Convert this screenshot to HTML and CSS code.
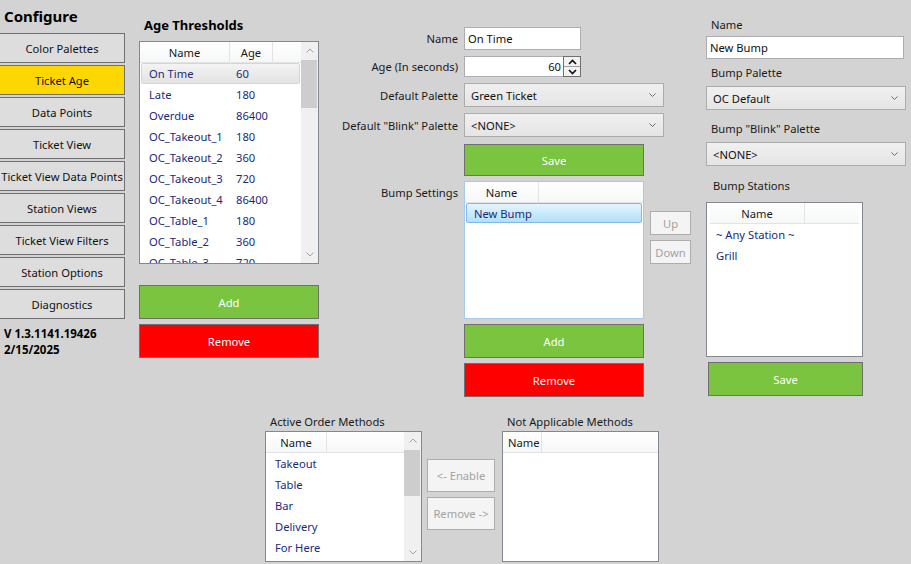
FILE: index.html
```html
<!DOCTYPE html>
<html lang="en">
<head>
    <meta charset="UTF-8">
    <meta name="viewport" content="width=device-width, initial-scale=1.0">
    <title>Configure - Ticket Age</title>
    <link rel="stylesheet" href="styles.css">
</head>
<body>
    <div class="main-area">
        <!-- Menu lateral -->
        <aside class="sidebar">
            <div class="title">Configure</div>
            <div class="nav">
                <button class="nav-btn">Color Palettes</button>
                <button class="nav-btn active">Ticket Age</button>
                <button class="nav-btn">Data Points</button>
                <button class="nav-btn">Ticket View</button>
                <button class="nav-btn">Ticket View Data Points</button>
                <button class="nav-btn">Station Views</button>
                <button class="nav-btn">Ticket View Filters</button>
                <button class="nav-btn">Station Options</button>
                <button class="nav-btn">Diagnostics</button>
            </div>
            <div class="version">V 1.3.1141.19426<br>2/15/2025</div>
        </aside>

        <!-- Lista de umbrales -->
        <section class="thresholds">
            <div class="section-title">Age Thresholds</div>
            <div class="listview thresholds-list">
                <div class="lv-main">
                    <div class="lv-header">
                        <div class="hcol th-name">Name</div>
                        <div class="hcol th-age">Age</div>
                        <div class="hcol fill"></div>
                    </div>
                    <div class="lv-row sel-gray"><span class="c-name">On Time</span><span>60</span></div>
                    <div class="lv-row"><span class="c-name">Late</span><span>180</span></div>
                    <div class="lv-row"><span class="c-name">Overdue</span><span>86400</span></div>
                    <div class="lv-row"><span class="c-name">OC_Takeout_1</span><span>180</span></div>
                    <div class="lv-row"><span class="c-name">OC_Takeout_2</span><span>360</span></div>
                    <div class="lv-row"><span class="c-name">OC_Takeout_3</span><span>720</span></div>
                    <div class="lv-row"><span class="c-name">OC_Takeout_4</span><span>86400</span></div>
                    <div class="lv-row"><span class="c-name">OC_Table_1</span><span>180</span></div>
                    <div class="lv-row"><span class="c-name">OC_Table_2</span><span>360</span></div>
                    <div class="lv-row"><span class="c-name">OC_Table_3</span><span>720</span></div>
                </div>
                <div class="scrollbar">
                    <div class="sb-btn"><svg width="8" height="5" viewBox="0 0 8 5"><path d="M0.5 4.5 L4 1 L7.5 4.5" fill="none" stroke="#a3a3a3"/></svg></div>
                    <div class="sb-track"><div class="sb-thumb"></div></div>
                    <div class="sb-btn"><svg width="8" height="5" viewBox="0 0 8 5"><path d="M0.5 0.5 L4 4 L7.5 0.5" fill="none" stroke="#a3a3a3"/></svg></div>
                </div>
            </div>
            <button class="btn green add-threshold">Add</button>
            <button class="btn red">Remove</button>
        </section>

        <!-- Edición del umbral -->
        <section class="editor">
            <div class="form-row r-name">
                <label class="form-label">Name</label>
                <div class="text-box name-box">On Time</div>
            </div>
            <div class="form-row r-age">
                <label class="form-label">Age (In seconds)</label>
                <div class="spin">
                    <div class="text-box spin-value">60</div>
                    <div class="spin-btns">
                        <div class="spin-btn"><svg width="9" height="6" viewBox="0 0 9 6"><path d="M1 5 L4.5 1.5 L8 5" fill="none" stroke="#111" stroke-width="1.6"/></svg></div>
                        <div class="spin-btn"><svg width="9" height="6" viewBox="0 0 9 6"><path d="M1 1 L4.5 4.5 L8 1" fill="none" stroke="#111" stroke-width="1.6"/></svg></div>
                    </div>
                </div>
            </div>
            <div class="form-row r-combo">
                <label class="form-label">Default Palette</label>
                <div class="combo wide-combo">
                    <span>Green Ticket</span>
                    <svg class="combo-arrow" width="7" height="4" viewBox="0 0 7 4"><path d="M0.5 0.5 L3.5 3.5 L6.5 0.5" fill="none" stroke="#6a6a6a"/></svg>
                </div>
            </div>
            <div class="form-row r-combo">
                <label class="form-label">Default "Blink" Palette</label>
                <div class="combo wide-combo">
                    <span>&lt;NONE&gt;</span>
                    <svg class="combo-arrow" width="7" height="4" viewBox="0 0 7 4"><path d="M0.5 0.5 L3.5 3.5 L6.5 0.5" fill="none" stroke="#6a6a6a"/></svg>
                </div>
            </div>
            <div class="form-row r-save">
                <span class="form-label"></span>
                <button class="btn green save-btn">Save</button>
            </div>
            <div class="form-row r-bump">
                <label class="form-label label-top">Bump Settings</label>
                <div class="listview bump-list focused">
                    <div class="lv-main">
                        <div class="lv-header">
                            <div class="hcol bh-name">Name</div>
                            <div class="hcol fill"></div>
                        </div>
                        <div class="lv-row sel-blue">New Bump</div>
                    </div>
                </div>
                <div class="order-btns">
                    <button class="btn disabled small">Up</button>
                    <button class="btn disabled small">Down</button>
                </div>
            </div>
            <div class="form-row r-add">
                <span class="form-label"></span>
                <button class="btn green mid-btn">Add</button>
            </div>
            <div class="form-row r-remove">
                <span class="form-label"></span>
                <button class="btn red mid-btn">Remove</button>
            </div>
        </section>

        <!-- Detalle del bump -->
        <section class="bump-detail">
            <div class="field-label l-name">Name</div>
            <div class="text-box bump-name">New Bump</div>
            <div class="field-label l-palette">Bump Palette</div>
            <div class="combo right-combo">
                <span>OC Default</span>
                <svg class="combo-arrow" width="7" height="4" viewBox="0 0 7 4"><path d="M0.5 0.5 L3.5 3.5 L6.5 0.5" fill="none" stroke="#6a6a6a"/></svg>
            </div>
            <div class="field-label l-blink">Bump "Blink" Palette</div>
            <div class="combo right-combo">
                <span>&lt;NONE&gt;</span>
                <svg class="combo-arrow" width="7" height="4" viewBox="0 0 7 4"><path d="M0.5 0.5 L3.5 3.5 L6.5 0.5" fill="none" stroke="#6a6a6a"/></svg>
            </div>
            <div class="field-label l-stations">Bump Stations</div>
            <div class="listview stations-list">
                <div class="lv-main">
                    <div class="lv-header inset">
                        <div class="hcol sh-name">Name</div>
                        <div class="hcol fill"></div>
                    </div>
                    <div class="lv-row">~ Any Station ~</div>
                    <div class="lv-row">Grill</div>
                </div>
            </div>
            <button class="btn green stations-save">Save</button>
        </section>
    </div>

    <!-- Métodos de orden -->
    <div class="bottom">
        <div class="method-group">
            <div class="group-label">Active Order Methods</div>
            <div class="listview methods-list">
                <div class="lv-main">
                    <div class="lv-header">
                        <div class="hcol mh-name">Name</div>
                        <div class="hcol fill"></div>
                    </div>
                    <div class="lv-row">Takeout</div>
                    <div class="lv-row">Table</div>
                    <div class="lv-row">Bar</div>
                    <div class="lv-row">Delivery</div>
                    <div class="lv-row">For Here</div>
                </div>
                <div class="scrollbar">
                    <div class="sb-btn"><svg width="8" height="5" viewBox="0 0 8 5"><path d="M0.5 4.5 L4 1 L7.5 4.5" fill="none" stroke="#a3a3a3"/></svg></div>
                    <div class="sb-track"><div class="sb-thumb short"></div></div>
                    <div class="sb-btn"><svg width="8" height="5" viewBox="0 0 8 5"><path d="M0.5 0.5 L4 4 L7.5 0.5" fill="none" stroke="#a3a3a3"/></svg></div>
                </div>
            </div>
        </div>
        <div class="move-btns">
            <button class="btn disabled move">&lt;- Enable</button>
            <button class="btn disabled move">Remove -&gt;</button>
        </div>
        <div class="method-group na-group">
            <div class="group-label">Not Applicable Methods</div>
            <div class="listview methods-list">
                <div class="lv-main">
                    <div class="lv-header">
                        <div class="hcol nh-name">Name</div>
                        <div class="hcol fill"></div>
                    </div>
                </div>
            </div>
        </div>
    </div>
</body>
</html>
```

FILE: styles.css
```css
body {
    margin: 0;
    width: 911px;
    height: 564px;
    overflow: hidden;
    background-color: #d3d3d3;
    font-family: 'Noto Sans', sans-serif;
    font-size: 11.2px;
    color: #111;
}
button {
    font-family: inherit;
    font-size: inherit;
    margin: 0;
    padding: 0;
}
.main-area {
    display: flex;
    height: 413px;
}
.main-area > * {
    flex: none;
}

/* Menu lateral */
.sidebar {
    width: 125px;
    display: flex;
    flex-direction: column;
}
.title {
    height: 33px;
    box-sizing: border-box;
    padding: 6px 0 0 4px;
    font-size: 15px;
    font-weight: bold;
    line-height: 20px;
    color: #000;
}
.nav {
    display: flex;
    flex-direction: column;
    gap: 2px;
}
.nav-btn {
    height: 30px;
    width: 126px;
    margin-left: -1px;
    background: #dddddd;
    border: 1px solid #707070;
    color: #111;
    white-space: nowrap;
    overflow: visible;
}
.nav-btn.active {
    background: #ffd700;
}
.version {
    padding: 7px 0 0 4px;
    font-size: 11.5px;
    font-weight: bold;
    line-height: 16px;
    color: #000;
}

/* Botones */
.btn {
    display: block;
    flex: none;
    border: 1px solid #6f6f6f;
    color: white;
    box-sizing: border-box;
}
.btn.green {
    background: #7ac43f;
}
.btn.red {
    background: #ff0000;
}
.btn.disabled {
    background: #f4f4f4;
    border-color: #adadad;
    color: #a2a2a2;
}

/* Listas */
.listview {
    display: flex;
    flex: none;
    background: #fff;
    border: 1px solid #828790;
    box-sizing: border-box;
}
.listview.focused {
    border-color: #a3cbee;
}
.lv-main {
    flex: 1;
    min-width: 0;
    overflow: hidden;
}
.lv-header {
    display: flex;
    height: 21px;
    box-sizing: border-box;
    border-bottom: 1px solid #e3e3e3;
    background: linear-gradient(#ffffff, #f6f7f8);
    color: #1a1a1a;
}
.lv-header.inset {
    margin: 0 3px;
}
.hcol {
    display: flex;
    align-items: center;
    justify-content: center;
    box-sizing: border-box;
    border-right: 1px solid #e3e3e3;
}
.hcol.fill {
    flex: 1;
    border-right: none;
}
.lv-row {
    display: flex;
    align-items: center;
    height: 21px;
    margin: 0 1px;
    padding-left: 8px;
    box-sizing: border-box;
    color: #1b2a78;
    white-space: nowrap;
}
.lv-row .c-name {
    width: 87px;
}
.lv-row.sel-gray {
    border: 1px solid #d6d6d6;
    border-radius: 2px;
    background: linear-gradient(#f3f3f3, #e3e3e3);
    padding-left: 7px;
}
.lv-row.sel-blue {
    height: 20px;
    border: 1px solid #7fb8ec;
    border-radius: 2px;
    background: linear-gradient(#e4f5fd, #b2e0f9);
    padding-left: 7px;
}
.scrollbar {
    width: 17px;
    display: flex;
    flex-direction: column;
    background: #f0f0f0;
}
.sb-btn {
    height: 17px;
    display: flex;
    align-items: center;
    justify-content: center;
}
.sb-track {
    flex: 1;
}
.sb-thumb {
    height: 48px;
    margin: 1px 1px 0 0;
    background: #cdcdcd;
}
.sb-thumb.short {
    height: 46px;
}

/* Umbrales */
.thresholds {
    width: 180px;
    margin-left: 14px;
}
.section-title {
    height: 41px;
    box-sizing: border-box;
    padding: 16px 0 0 5px;
    font-size: 13px;
    font-weight: bold;
    line-height: 18px;
    color: #000;
}
.thresholds-list {
    height: 223px;
}
.th-name {
    width: 90px;
}
.th-age {
    width: 43px;
}
.thresholds .btn {
    width: 180px;
    height: 34px;
}
.add-threshold {
    margin: 21px 0 5px;
}

/* Editor */
.editor {
    width: 372px;
    display: flex;
    flex-direction: column;
    padding-top: 27px;
}
.form-row {
    display: flex;
    align-items: center;
}
.form-label {
    flex: none;
    width: 145px;
    padding-right: 6px;
    box-sizing: border-box;
    text-align: right;
    white-space: nowrap;
    color: #1a1a1a;
}
.form-label.label-top {
    align-self: flex-start;
    margin-top: 4px;
}
.r-age, .r-combo {
    margin-top: 6px;
}
.r-save {
    margin-top: 7px;
}
.r-bump {
    margin-top: 5px;
    align-items: flex-start;
}
.r-add, .r-remove {
    margin-top: 5px;
}
.text-box {
    flex: none;
    height: 23px;
    box-sizing: border-box;
    background: #fff;
    border: 1px solid #abadb3;
    padding: 0 3px;
    display: flex;
    align-items: center;
    color: #111;
}
.name-box {
    width: 117px;
}
.spin {
    display: flex;
    height: 21px;
}
.spin-value {
    width: 99px;
    height: 21px;
    justify-content: flex-end;
    padding-right: 2px;
    border-right: none;
}
.spin-btns {
    width: 18px;
    border: 1px solid #707070;
    box-sizing: border-box;
    display: flex;
    flex-direction: column;
    background: #f2f2f2;
}
.spin-btn {
    flex: 1;
    display: flex;
    align-items: center;
    justify-content: center;
}
.spin-btn + .spin-btn {
    border-top: 1px solid #a0a0a0;
}
.combo {
    flex: none;
    height: 24px;
    box-sizing: border-box;
    display: flex;
    align-items: center;
    justify-content: space-between;
    padding: 0 7px 0 6px;
    border: 1px solid #acacac;
    background: linear-gradient(#f0f0f0, #e5e5e5);
    color: #111;
}
.wide-combo {
    width: 200px;
}
.save-btn {
    width: 180px;
    height: 32px;
}
.bump-list {
    width: 180px;
    height: 138px;
}
.bh-name {
    width: 74px;
}
.order-btns {
    display: flex;
    flex-direction: column;
    gap: 5px;
    margin: 30px 0 0 6px;
}
.btn.small {
    width: 41px;
    height: 24px;
}
.mid-btn {
    width: 180px;
    height: 34px;
}

/* Detalle del bump */
.bump-detail {
    width: 200px;
    margin-left: 15px;
    display: flex;
    flex-direction: column;
}
.field-label {
    height: 16px;
    line-height: 16px;
    padding-left: 5px;
    color: #1a1a1a;
}
.l-name {
    margin: 17px 0 3px;
}
.bump-name {
    width: 198px;
}
.l-palette {
    margin: 6px 0 5px;
}
.l-blink {
    margin: 11px 0 5px;
}
.right-combo {
    width: 200px;
}
.l-stations {
    margin: 12px 0 8px;
    padding-left: 7px;
}
.stations-list {
    width: 157px;
    height: 155px;
}
.sh-name {
    width: 95px;
}
.stations-save {
    width: 155px;
    height: 34px;
    margin: 5px 0 0 2px;
}

/* Métodos de orden */
.bottom {
    display: flex;
    padding-left: 265px;
}
.group-label {
    height: 16px;
    line-height: 16px;
    margin-top: 1px;
    padding-left: 5px;
    color: #1a1a1a;
}
.methods-list {
    width: 157px;
    height: 131px;
    margin-top: 1px;
}
.mh-name {
    width: 61px;
}
.nh-name {
    width: 39px;
    justify-content: flex-start;
    padding-left: 5px;
}
.move-btns {
    display: flex;
    flex-direction: column;
    gap: 5px;
    margin: 46px 0 0 5px;
}
.btn.move {
    width: 68px;
    height: 33px;
}
.na-group {
    margin-left: 7px;
}
```
